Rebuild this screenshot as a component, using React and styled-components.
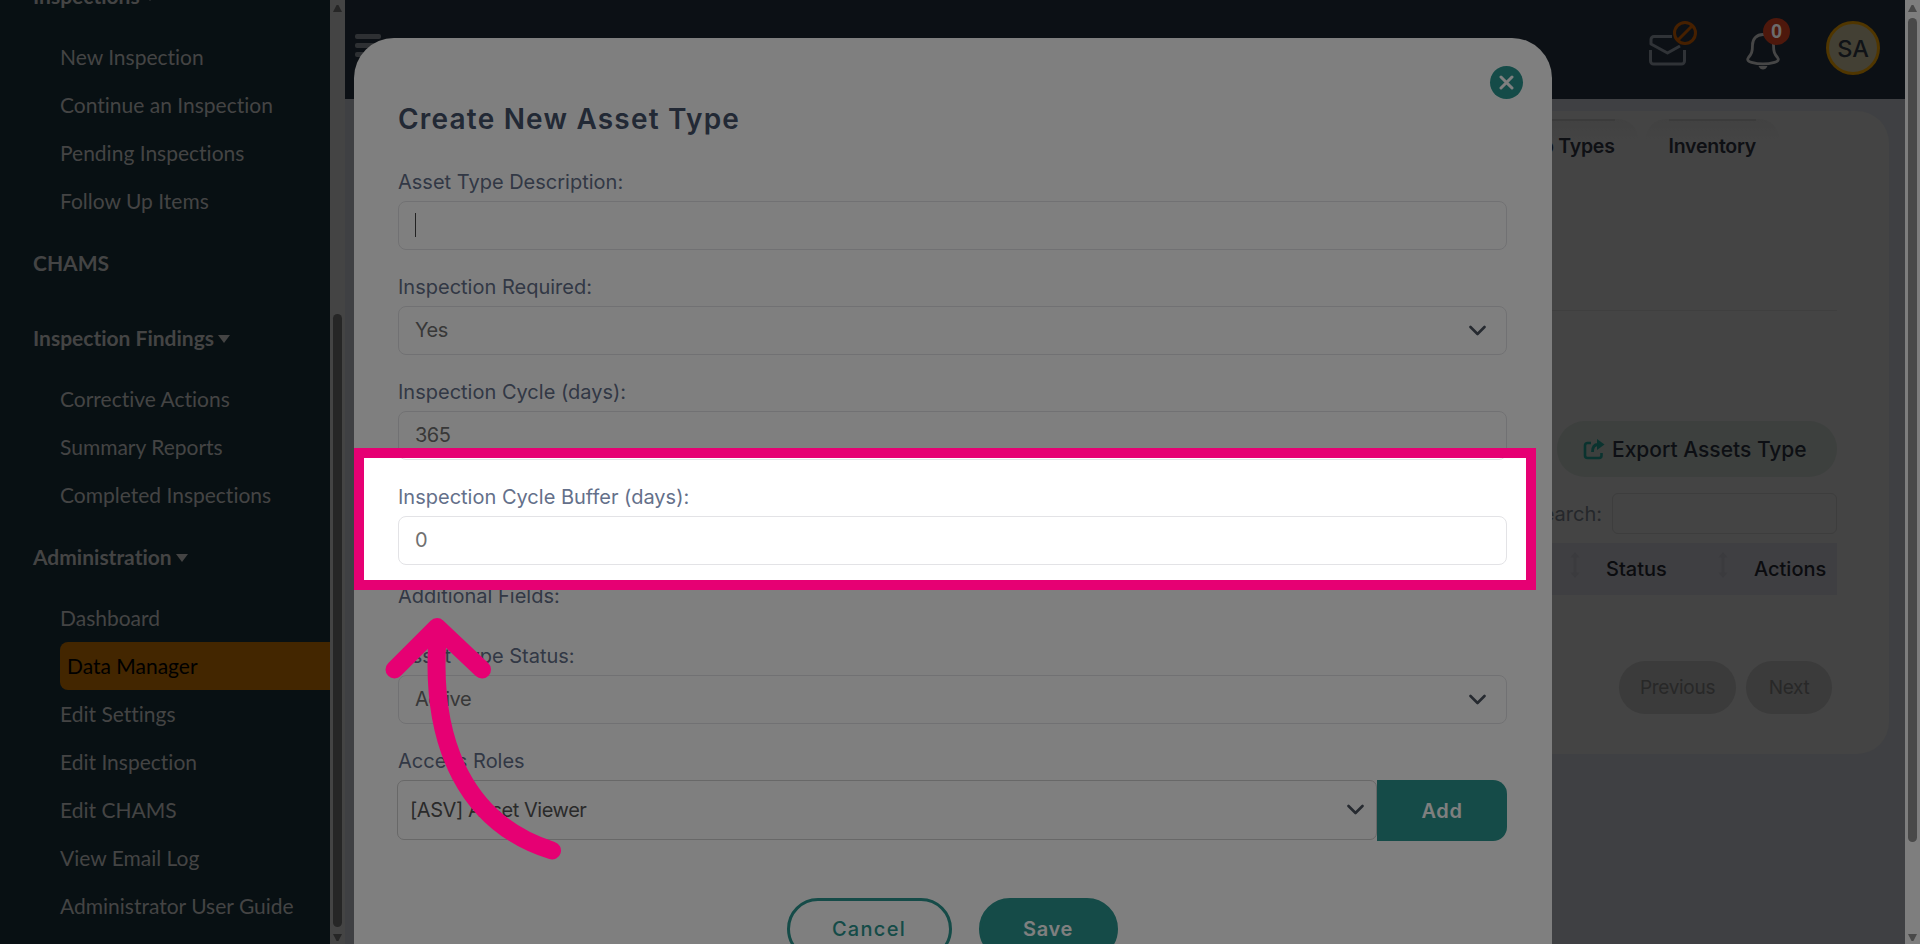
import React from 'react';
import styled, { createGlobalStyle } from 'styled-components';

const GlobalStyle = createGlobalStyle`
  * { box-sizing: border-box; }
  body {
    margin: 0;
    overflow: hidden;
    font-family: Inter, 'Open Sans', sans-serif;
  }
`;

const Screen = styled.div`
  position: relative;
  display: flex;
  width: 1920px;
  height: 944px;
  overflow: hidden;
  background-color: #7e8086;
`;

/* ---------- sidebar ---------- */
const Sidebar = styled.nav`
  display: flex;
  flex-direction: column;
  flex: none;
  width: 330px;
  height: 944px;
  overflow: hidden;
  background-color: #102026;
  color: #888;
  font-family: Lato, sans-serif;
  font-size: 21px;
  font-variant-ligatures: none;
`;

const MenuList = styled.div`
  display: flex;
  flex-direction: column;
  margin-top: -42px;
`;

const MenuHeading = styled.div`
  display: flex;
  align-items: center;
  flex: none;
  height: 48px;
  margin: 14px 0 13px;
  padding: 0 0 2px 33px;
  font-weight: bold;
`;

const Caret = styled.span`
  margin: 3px 0 0 4px;
  border: 6.5px solid transparent;
  border-top: 8px solid #888;
  border-bottom: none;
`;

const SubMenu = styled.div`
  display: flex;
  flex-direction: column;
  padding-left: 60px;
`;

const MenuItem = styled.div`
  display: flex;
  align-items: center;
  height: 48px;
  padding: 0 0 2px ${(props) => (props.$active ? '7px' : '0')};
  border-radius: 8px 0 0 8px;
  background-color: ${(props) => (props.$active ? '#864c00' : 'transparent')};
  color: ${(props) => (props.$active ? '#000' : '#888')};
  white-space: nowrap;
`;

/* ---------- scrollbars ---------- */
const ScrollTrack = styled.div`
  display: flex;
  flex-direction: column;
  align-items: center;
  justify-content: space-between;
  flex: none;
  width: 15px;
  height: 944px;
  padding: 5px 0 3px;
  background-color: ${(props) => props.$track};
`;

const ScrollArrow = styled.span`
  width: 9px;
  height: 7px;
  background-color: ${(props) => props.$color};
  clip-path: ${(props) => (props.$down ? 'polygon(0 0, 100% 0, 60% 100%, 40% 100%)' : 'polygon(40% 0, 60% 0, 100% 100%, 0 100%)')};
`;

const ScrollRail = styled.div`
  flex: 1;
  padding-top: ${(props) => props.$offset}px;
`;

const ScrollThumb = styled.div`
  width: 9px;
  height: ${(props) => props.$size}px;
  border-radius: 5px;
  background-color: ${(props) => props.$color};
`;

/* ---------- page behind the modal ---------- */
const Main = styled.main`
  display: flex;
  flex-direction: column;
  flex: 1;
  min-width: 0;
`;

const Header = styled.header`
  display: flex;
  justify-content: space-between;
  flex: none;
  height: 99px;
  padding: 0 25px 0 10px;
  background-color: #18202a;
`;

const Hamburger = styled.div`
  display: flex;
  flex-direction: column;
  gap: 4px;
  padding-top: 34px;

  span {
    width: 26px;
    height: 5px;
    border-radius: 2px;
    background-color: #5c6066;
  }
`;

const HeaderTools = styled.div`
  display: flex;
  align-items: flex-start;
`;

const MailIcon = styled.svg`
  width: 52px;
  height: 50px;
  margin: 18px 47px 0 0;
`;

const BellWrap = styled.div`
  position: relative;
  width: 34px;
  height: 40px;
  margin: 31px 46px 0 0;
`;

const Badge = styled.span`
  position: absolute;
  top: -13px;
  left: 17px;
  width: 27px;
  height: 27px;
  border-radius: 50%;
  background-color: #9c3019;
  color: #d8d8d8;
  font: bold 20px/27px 'Liberation Sans', Arial, sans-serif;
  text-align: center;
`;

const Avatar = styled.div`
  width: 54px;
  height: 54px;
  margin-top: 21px;
  border: 3px solid #a06c00;
  border-radius: 50%;
  background-color: #868068;
  color: #20262e;
  font-size: 23.5px;
  font-weight: 500;
  line-height: 49px;
  text-align: center;
`;

const Card = styled.section`
  display: flex;
  flex-direction: column;
  align-items: flex-end;
  height: 643px;
  margin: 12px 16px 0 25px;
  padding: 8px 52px 0 0;
  border-radius: 32px;
  background-color: #888;
`;

const Tabs = styled.div`
  display: flex;
  gap: 8px;
  margin-right: 58px;
`;

const Tab = styled.div`
  padding: 0 23px;
  border-radius: 20px 20px 0 0;
  background-image: linear-gradient(#838383, #888 20px);

  div {
    padding-top: 13px;
    border-top: 2px solid #767676;
    color: #1c2028;
    font-size: 19.5px;
    font-weight: 600;
    letter-spacing: -0.25px;
    line-height: 24px;
  }
`;

const Divider = styled.hr`
  width: 100%;
  height: 1px;
  margin: 152px 0 110px;
  border: none;
  background-color: #7e7e7e;
`;

const ExportButton = styled.div`
  display: flex;
  align-items: center;
  flex: none;
  gap: 7px;
  width: 280px;
  height: 56px;
  padding-left: 26px;
  border-radius: 28px;
  background-color: #7a807c;
  color: #1a1f28;
  font-size: 21px;
  font-weight: 500;
  white-space: nowrap;
`;

const SearchRow = styled.label`
  display: flex;
  align-items: center;
  gap: 10px;
  margin-top: 16px;
  color: #4a4f56;
  font-size: 20px;
`;

const SearchBox = styled.div`
  width: 225px;
  height: 41px;
  border: 1px solid #7a7a7a;
  border-radius: 6px;
`;

const TableHead = styled.div`
  display: flex;
  align-items: center;
  justify-content: flex-end;
  flex: none;
  width: 100%;
  height: 52px;
  margin-top: 9px;
  padding-right: 11px;
  background-color: #7e7e84;
  color: #16181e;
  font-size: 20px;
  font-weight: 500;
`;

const HeadCell = styled.span`
  width: ${(props) => props.$width}px;
`;

const SortIcon = styled.svg`
  width: 10px;
  height: 26px;
  margin: 0 26px 8px 0;
`;

const Pager = styled.div`
  display: flex;
  gap: 10px;
  margin: 66px 5px 0 0;
`;

const PageButton = styled.div`
  width: ${(props) => props.$width}px;
  height: 53px;
  border-radius: 27px;
  background-color: #767676;
  color: #505050;
  font-size: 19px;
  letter-spacing: -0.3px;
  line-height: 53px;
  text-align: center;
`;

/* ---------- modal ---------- */
const Modal = styled.div`
  position: absolute;
  top: 38px;
  left: 354px;
  display: flex;
  flex-direction: column;
  width: 1198px;
  height: 960px;
  padding: 64px 45px 0 44px;
  border-radius: 40px;
  background-color: #fff;
`;

const CloseButton = styled.div`
  position: absolute;
  top: 28px;
  right: 29px;
  display: flex;
  align-items: center;
  justify-content: center;
  width: 33px;
  height: 33px;
  border-radius: 50%;
  background-color: #2a9790;
`;

const Title = styled.h2`
  margin: 0 0 34px;
  color: #45526a;
  font-size: 28px;
  font-weight: 600;
  letter-spacing: 1.2px;
  line-height: 34px;
`;

const Field = styled.div`
  display: flex;
  flex-direction: column;
  margin-bottom: ${(props) => props.$bottom || 25}px;
`;

const Label = styled.label`
  color: #64708a;
  font-size: 20px;
  line-height: 24px;
`;

const Control = styled.div`
  display: flex;
  align-items: center;
  justify-content: space-between;
  height: 49px;
  margin-top: 7px;
  padding: 0 20px 1px 16px;
  border: 1.5px solid #e3e3e6;
  border-radius: 8px;
  color: #707070;
  font-size: 20px;
  letter-spacing: -0.5px;
`;

const TextCursor = styled.span`
  width: 1px;
  height: 24px;
  background-color: #444;
`;

const RoleRow = styled.div`
  display: flex;
  margin: 7px 0 0 -1px;
`;

const RoleSelect = styled.div`
  display: flex;
  align-items: center;
  justify-content: space-between;
  flex: 1;
  height: 60px;
  padding: 0 12px 1px;
  border: 1px solid #d0d0d0;
  border-radius: 7px;
  color: #555;
  font-size: 20px;
  letter-spacing: -0.45px;
`;

const AddButton = styled.div`
  width: 130px;
  height: 61px;
  border-radius: 0 14px 14px 0;
  background-color: #2a9790;
  color: #fff;
  font-size: 20px;
  font-weight: 600;
  letter-spacing: 0.6px;
  line-height: 62px;
  text-align: center;
`;

const Actions = styled.div`
  display: flex;
  justify-content: center;
  gap: 27px;
  margin: 32px 1px 0 0;
`;

const ActionButton = styled.div`
  width: ${(props) => props.$width}px;
  height: 62px;
  border: 3px solid #2a9790;
  border-radius: 31px;
  background-color: ${(props) => (props.$primary ? '#2a9790' : '#fff')};
  color: ${(props) => (props.$primary ? '#fff' : '#2a9790')};
  font-size: 20px;
  font-weight: ${(props) => (props.$primary ? 600 : 500)};
  letter-spacing: ${(props) => (props.$primary ? 0.6 : 1.3)}px;
  line-height: 56px;
  text-align: center;
`;

/* ---------- guide highlight ---------- */
const Spotlight = styled.div`
  position: absolute;
  top: 448px;
  left: 354px;
  width: 1182px;
  height: 142px;
  border: 10px solid #e60073;
  box-shadow: 0 0 0 2000px rgba(0, 0, 0, 0.5);
`;

const GuideArrow = styled.svg`
  position: absolute;
  top: 610px;
  left: 380px;
  width: 190px;
  height: 256px;
`;

const inspectionItems = ['New Inspection', 'Continue an Inspection', 'Pending Inspections', 'Follow Up Items'];
const findingItems = ['Corrective Actions', 'Summary Reports', 'Completed Inspections'];
const adminItems = [
  'Dashboard',
  'Data Manager',
  'Edit Settings',
  'Edit Inspection',
  'Edit CHAMS',
  'View Email Log',
  'Administrator User Guide',
];

const MenuGroup = ({ title, items, active }) => (
  <>
    <MenuHeading>
      {title}
      {items && <Caret />}
    </MenuHeading>
    {items && (
      <SubMenu>
        {items.map((item) => (
          <MenuItem key={item} $active={item === active}>{item}</MenuItem>
        ))}
      </SubMenu>
    )}
  </>
);

const Scrollbar = ({ track, color, offset, size }) => (
  <ScrollTrack $track={track}>
    <ScrollArrow $color={color} />
    <ScrollRail $offset={offset}>
      <ScrollThumb $color={color} $size={size} />
    </ScrollRail>
    <ScrollArrow $color={color} $down />
  </ScrollTrack>
);

const Chevron = () => (
  <svg width="18" height="11" viewBox="0 0 18 11" fill="none">
    <path d="M2.500 2L9.500 9l7-7" stroke="#4c5460" strokeWidth="2.600" strokeLinecap="round" strokeLinejoin="round" />
  </svg>
);

const Sort = () => (
  <SortIcon viewBox="0 0 10 26">
    <path d="M5 0l4.500 5.500h-3v15h3L5 26 .5 20.500h3v-15h-3z" fill="#76767c" />
  </SortIcon>
);

const FormField = ({ label, value, select, cursor, bottom }) => (
  <Field $bottom={bottom}>
    <Label>{label}</Label>
    <Control>
      {cursor ? <TextCursor /> : <span>{value}</span>}
      {select && <Chevron />}
    </Control>
  </Field>
);

class App extends React.Component {
  renderHeader() {
    return (
      <Header>
        <Hamburger>
          <span />
          <span />
          <span />
        </Hamburger>
        <HeaderTools>
          <MailIcon viewBox="0 0 52 50" fill="none">
            <g stroke="#60666e" strokeWidth="3" strokeLinejoin="round">
              <path d="M25 18.500H7a3 3 0 0 0-3 3V26l16.500 9L33 28" />
              <path d="M3.500 32v11a3 3 0 0 0 3 3h28a3 3 0 0 0 3-3V32" />
            </g>
            <g stroke="#8c4000" strokeWidth="3">
              <circle cx="38" cy="15" r="10.500" />
              <path d="M45 8L31 22" />
            </g>
          </MailIcon>
          <BellWrap>
            <svg width="34" height="40" viewBox="0 0 34 40" fill="none">
              <path d="M17 3.500c-6.500 0-10.500 4.500-10.500 10.500 0 7-1 9-4 12.500-2 2.500 0 4 3 4.800 7 2 16 2 23 0 3-.8 5-2.300 3-4.800-3-3.500-4-5.500-4-12.500C27.500 8 23.500 3.500 17 3.500z" stroke="#8c8c8c" strokeWidth="2.800" />
              <path d="M12.500 35h9c-1 2.500-2.700 3.500-4.500 3.500s-3.500-1-4.500-3.500z" fill="#8c8c8c" />
            </svg>
            <Badge>0</Badge>
          </BellWrap>
          <Avatar>SA</Avatar>
        </HeaderTools>
      </Header>
    );
  }

  renderAssets() {
    return (
      <Card>
        <Tabs>
          <Tab><div>Group Types</div></Tab>
          <Tab><div>Inventory</div></Tab>
        </Tabs>
        <Divider />
        <ExportButton>
          <svg width="22" height="22" viewBox="0 0 22 22" fill="none">
            <path d="M8 5H4.500A2.500 2.500 0 0 0 2 7.500v10A2.500 2.500 0 0 0 4.500 20H16a2.500 2.500 0 0 0 2.500-2.500V15" stroke="#14665e" strokeWidth="2.600" />
            <path d="M9.500 14c0-5 1.500-7.500 5.500-7.500" stroke="#14665e" strokeWidth="2.800" />
            <path d="M14 1l7.500 5.500L14 12z" fill="#14665e" />
          </svg>
          Export Assets Type
        </ExportButton>
        <SearchRow>
          Search:
          <SearchBox />
        </SearchRow>
        <TableHead>
          <Sort />
          <HeadCell $width={112}>Status</HeadCell>
          <Sort />
          <HeadCell $width={72}>Actions</HeadCell>
        </TableHead>
        <Pager>
          <PageButton $width={117}>Previous</PageButton>
          <PageButton $width={86}>Next</PageButton>
        </Pager>
      </Card>
    );
  }

  renderModal() {
    return (
      <Modal>
        <CloseButton>
          <svg width="15" height="15" viewBox="0 0 15 15">
            <path d="M2 2l11 11M13 2L2 13" stroke="#fff" strokeWidth="3" strokeLinecap="round" />
          </svg>
        </CloseButton>
        <Title>Create New Asset Type</Title>
        <FormField label="Asset Type Description:" cursor />
        <FormField label="Inspection Required:" value="Yes" select />
        <FormField label="Inspection Cycle (days):" value="365" />
        <FormField label="Inspection Cycle Buffer (days):" value="0" bottom={19} />
        <Field $bottom={36}>
          <Label>Additional Fields:</Label>
        </Field>
        <FormField label="Asset Type Status:" value="Active" select />
        <Field>
          <Label>Access Roles</Label>
          <RoleRow>
            <RoleSelect>
              [ASV] Asset Viewer
              <Chevron />
            </RoleSelect>
            <AddButton>Add</AddButton>
          </RoleRow>
        </Field>
        <Actions>
          <ActionButton $width={165}>Cancel</ActionButton>
          <ActionButton $width={139} $primary>Save</ActionButton>
        </Actions>
      </Modal>
    );
  }

  render() {
    return (
      <Screen>
        <GlobalStyle />
        <Sidebar>
          <MenuList>
            <MenuGroup title="Inspections" items={inspectionItems} />
            <MenuGroup title="CHAMS" />
            <MenuGroup title="Inspection Findings" items={findingItems} />
            <MenuGroup title="Administration" items={adminItems} active="Data Manager" />
          </MenuList>
        </Sidebar>
        <Scrollbar track="#888" color="#4c4c4c" offset={302} size={613} />
        <Main>
          {this.renderHeader()}
          {this.renderAssets()}
        </Main>
        <Scrollbar track="#fcfcfc" color="#929292" offset={6} size={824} />
        {this.renderModal()}
        <Spotlight />
        <GuideArrow viewBox="380 610 190 256" fill="none" stroke="#e60073" strokeWidth="18" strokeLinecap="round" strokeLinejoin="round">
          <path d="M552 850.500C470 825 428 748 438 632" />
          <path d="M394.500 669.500L437 627l45 42.500" />
        </GuideArrow>
      </Screen>
    );
  }
}

export default App;
